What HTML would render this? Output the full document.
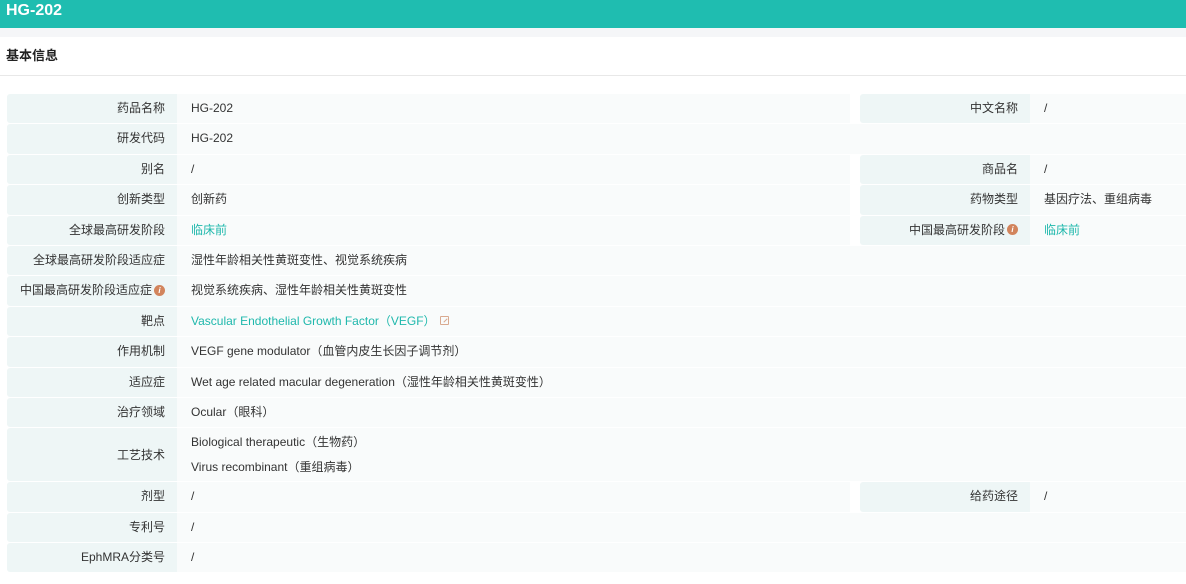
<!DOCTYPE html>
<html><head><meta charset="utf-8"><style>
*{margin:0;padding:0;box-sizing:border-box}
body{width:1186px;height:584px;background:#fff;font-family:"Liberation Sans","Noto Sans CJK SC",sans-serif;font-size:12px;color:#333;overflow:hidden}
.top{height:28px;background:#1fbdb0;color:#fff;font-weight:bold;font-size:16px;line-height:21px;padding-left:6px}
.gap{height:9px;background:#f5f6f8}
.sec{height:39px;border-bottom:1px solid #e8e8e8;font-weight:bold;font-size:13px;line-height:38px;padding-left:6px;color:#222}
.tbl{position:absolute;top:94px;left:7px;width:1179px}
.row{display:flex;height:29.4px;margin-bottom:1px;line-height:29px}
.row.tall{height:53px;line-height:normal}
.l{width:170px;background:#eef6f6;text-align:right;padding-right:12px;border-radius:3px 0 0 3px}
.v{background:#f9fbfb;padding-left:14px}
.v1{width:673px}
.vfull{flex:1}
.sp{width:10px;background:#fff}
.r{width:170px}
.rv{flex:1}
.t{color:#1fb8ac}
.i{display:inline-block;width:11px;height:11px;border-radius:50%;background:#d2845c;color:#fff;font-size:8px;line-height:11px;text-align:center;font-style:italic;font-weight:bold;vertical-align:middle;margin-left:2px;margin-top:-2px}
.tall .l,.tall .v{display:flex;flex-direction:column;justify-content:center}
.tall .v div{line-height:25px}
.lk{display:inline-block;width:9px;height:9px;border:1px solid #d9a98f;border-radius:1px;vertical-align:middle;margin-left:4px;margin-top:-2px;position:relative}
.lk:after{content:"";position:absolute;left:2px;top:3px;width:5px;height:1px;background:#d9a98f;transform:rotate(-45deg)}
</style></head><body>
<div class="top">HG-202</div>
<div class="gap"></div>
<div class="sec">基本信息</div>
<div class="tbl">
<div class="row"><div class="l">药品名称</div><div class="v v1">HG-202</div><div class="sp"></div><div class="l r">中文名称</div><div class="v rv">/</div></div>
<div class="row"><div class="l">研发代码</div><div class="v vfull">HG-202</div></div>
<div class="row"><div class="l">别名</div><div class="v v1">/</div><div class="sp"></div><div class="l r">商品名</div><div class="v rv">/</div></div>
<div class="row"><div class="l">创新类型</div><div class="v v1">创新药</div><div class="sp"></div><div class="l r">药物类型</div><div class="v rv">基因疗法、重组病毒</div></div>
<div class="row"><div class="l">全球最高研发阶段</div><div class="v v1 t">临床前</div><div class="sp"></div><div class="l r">中国最高研发阶段<span class="i">i</span></div><div class="v rv t">临床前</div></div>
<div class="row"><div class="l">全球最高研发阶段适应症</div><div class="v vfull">湿性年龄相关性黄斑变性、视觉系统疾病</div></div>
<div class="row"><div class="l">中国最高研发阶段适应症<span class="i">i</span></div><div class="v vfull">视觉系统疾病、湿性年龄相关性黄斑变性</div></div>
<div class="row"><div class="l">靶点</div><div class="v vfull t">Vascular Endothelial Growth Factor（VEGF）<span class="lk"></span></div></div>
<div class="row"><div class="l">作用机制</div><div class="v vfull">VEGF gene modulator（血管内皮生长因子调节剂）</div></div>
<div class="row"><div class="l">适应症</div><div class="v vfull">Wet age related macular degeneration（湿性年龄相关性黄斑变性）</div></div>
<div class="row"><div class="l">治疗领域</div><div class="v vfull">Ocular（眼科）</div></div>
<div class="row tall"><div class="l">工艺技术</div><div class="v vfull"><div>Biological therapeutic（生物药）</div><div>Virus recombinant（重组病毒）</div></div></div>
<div class="row"><div class="l">剂型</div><div class="v v1">/</div><div class="sp"></div><div class="l r">给药途径</div><div class="v rv">/</div></div>
<div class="row"><div class="l">专利号</div><div class="v vfull">/</div></div>
<div class="row"><div class="l">EphMRA分类号</div><div class="v vfull">/</div></div>
</div>
</body></html>
